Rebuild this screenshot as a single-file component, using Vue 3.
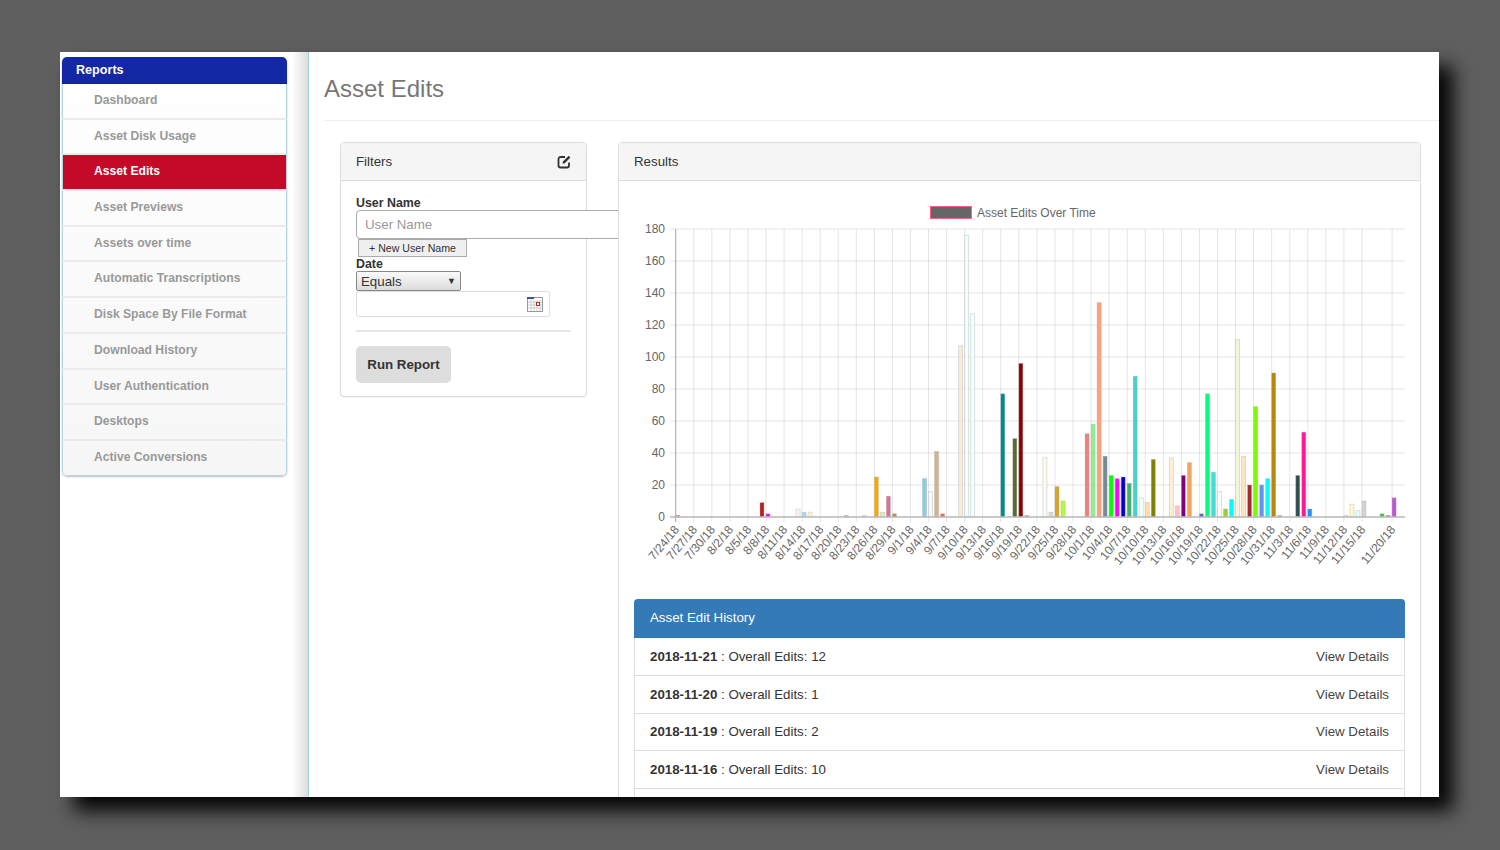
<script setup>
const navItems = [
  'Dashboard',
  'Asset Disk Usage',
  'Asset Edits',
  'Asset Previews',
  'Assets over time',
  'Automatic Transcriptions',
  'Disk Space By File Format',
  'Download History',
  'User Authentication',
  'Desktops',
  'Active Conversions',
]

const history = [
  { date: '2018-11-21', edits: 12 },
  { date: '2018-11-20', edits: 1 },
  { date: '2018-11-19', edits: 2 },
  { date: '2018-11-16', edits: 10 },
  { date: '2018-11-15', edits: 4 },
]

// chart geometry, in svg coordinates
const left = 41.7
const right = 771
const zero = 317
const top = 29
const step = 6.02
const unit = (zero - top) / 180

const yTicks = [0, 20, 40, 60, 80, 100, 120, 140, 160, 180].map((v) => ({
  v,
  y: zero - v * unit,
}))

const dateLabels = [
  '7/24/18', '7/27/18', '7/30/18', '8/2/18', '8/5/18', '8/8/18', '8/11/18', '8/14/18',
  '8/17/18', '8/20/18', '8/23/18', '8/26/18', '8/29/18', '9/1/18', '9/4/18', '9/7/18',
  '9/10/18', '9/13/18', '9/16/18', '9/19/18', '9/22/18', '9/25/18', '9/28/18', '10/1/18',
  '10/4/18', '10/7/18', '10/10/18', '10/13/18', '10/16/18', '10/19/18', '10/22/18',
  '10/25/18', '10/28/18', '10/31/18', '11/3/18', '11/6/18', '11/9/18', '11/12/18', '11/15/18',
]
const xTicks = [
  ...dateLabels.map((label, i) => ({ label, x: left + i * 3 * step })),
  { label: '11/20/18', x: left + 119 * step },
]

const rawBars = [
  [0, 1, '#ff6384'], [14, 9, '#b22222'], [15, 2, '#ff00ff'], [20, 5, '#fff0f5'],
  [21, 3, '#add8e6'], [22, 3, '#fafad2'], [28, 1, '#b0a0d8'], [31, 1, '#faebd7'],
  [33, 25, '#ffa500'], [34, 3, '#eee8aa'], [35, 13, '#db7093'], [36, 2, '#cd853f'],
  [41, 24, '#87ceeb'], [42, 16, '#f8f8f8'], [43, 41, '#d2b48c'], [44, 2, '#ff6347'],
  [47, 107, '#faebd7'], [48, 176, '#f0ffff'], [49, 127, '#f0ffff'], [54, 77, '#008b8b'],
  [56, 49, '#556b2f'], [57, 96, '#8b0000'], [58, 1, '#9a9acd'], [61, 37, '#fffaf0'],
  [62, 3, '#dcdcdc'], [63, 19, '#daa520'], [64, 10, '#adff2f'], [68, 52, '#f08080'],
  [69, 58, '#90ee90'], [70, 134, '#ffa07a'], [71, 38, '#778899'], [72, 26, '#00ff00'],
  [73, 24, '#ff00ff'], [74, 25, '#0000cd'], [75, 21, '#3cb371'], [76, 88, '#48d1cc'],
  [77, 12, '#f5fffa'], [78, 9, '#ffdead'], [79, 36, '#808000'], [82, 37, '#ffefd5'],
  [83, 7, '#ffc0cb'], [84, 26, '#800080'], [85, 34, '#f4a460'], [87, 2, '#6a5acd'],
  [88, 77, '#00ff7f'], [89, 28, '#40e0d0'], [90, 16, '#fbfbfb'], [91, 5, '#9acd32'],
  [92, 11, '#00ffff'], [93, 111, '#f5f5dc'], [94, 38, '#ffe4c4'], [95, 20, '#a52a2a'],
  [96, 69, '#7cfc00'], [97, 20, '#6495ed'], [98, 24, '#00ffff'], [99, 90, '#b8860b'],
  [100, 1, '#bdb76b'], [103, 26, '#2f4f4f'], [104, 53, '#ff1493'], [105, 5, '#1e90ff'],
  [111, 1, '#e6e6fa'], [112, 8, '#fffacd'], [113, 4, '#e0ffff'], [114, 10, '#d3d3d3'],
  [117, 2, '#32cd32'], [118, 1, '#b06080'], [119, 12, '#ba55d3'],
]
const bars = rawBars.map(([i, value, color]) => ({
  x: left + i * step,
  y: zero - value * unit,
  h: value * unit,
  color,
}))
</script>

<template>
  <div class="page">
    <div class="window">
      <aside class="sidebar">
        <div class="nav">
          <div class="nav-title">Reports</div>
          <a
            v-for="item in navItems"
            :key="item"
            class="nav-item"
            :class="{ active: item === 'Asset Edits' }"
          >{{ item }}</a>
        </div>
      </aside>

      <main class="main">
        <h1 class="title">Asset Edits</h1>
        <div class="content">
          <section class="panel filters">
            <div class="panel-heading">
              <span>Filters</span>
              <svg class="edit-icon" width="14" height="14" viewBox="0 0 14 14">
                <path d="M8 2H3.5A2 2 0 0 0 1.500 4v6.500a2 2 0 0 0 2 2h6.500a2 2 0 0 0 2-2V7.500" fill="none" stroke="#333" stroke-width="1.800" />
                <path d="M5.500 8.800 6 6.400 11.600.8 13.400 2.600 7.800 8.200z" fill="#333" />
              </svg>
            </div>
            <div class="filters-body">
              <label class="field-label">User Name</label>
              <input class="text-input" type="text" placeholder="User Name" />
              <button class="add-btn" type="button">+ New User Name</button>
              <label class="field-label date-label">Date</label>
              <div class="select-box">
                <span>Equals</span>
                <span class="select-arrow">▼</span>
              </div>
              <div class="date-input">
                <svg width="16" height="15" viewBox="0 0 16 15">
                  <rect x="0.500" y="0.500" width="15" height="14" fill="#fff" stroke="#999" />
                  <rect x="0" y="0" width="7" height="2" fill="#3f4fa8" />
                  <path d="M1 5h14M1 8h14M1 11h14M4 3v11M7 3v11M10 3v11M13 3v11" stroke="#ccc" stroke-width="1" />
                  <rect x="9.500" y="5.500" width="3" height="3" fill="#fff" stroke="#b03030" />
                </svg>
              </div>
              <div class="divider"></div>
              <button class="run-btn" type="button">Run Report</button>
            </div>
          </section>

          <section class="panel results">
            <div class="panel-heading">Results</div>
            <div class="results-body">
              <svg class="chart" width="771" height="399" viewBox="0 0 771 399">
                <rect x="296.500" y="6.500" width="41" height="12" fill="#666" stroke="#ff6384" />
                <text x="343" y="17" class="legend-text">Asset Edits Over Time</text>

                <g stroke="rgba(0,0,0,0.1)">
                  <line
                    v-for="t in yTicks"
                    :key="t.v"
                    x1="36"
                    :x2="right"
                    :y1="t.y"
                    :y2="t.y"
                  />
                  <line
                    v-for="t in xTicks"
                    :key="t.label"
                    :x1="t.x"
                    :x2="t.x"
                    :y1="top"
                    :y2="zero + 5"
                  />
                </g>
                <line :x1="left" :x2="left" :y1="top" :y2="zero + 5" stroke="#aaa" />

                <rect
                  v-for="b in bars"
                  :key="b.x"
                  :x="b.x"
                  :y="b.y"
                  width="4"
                  :height="b.h"
                  :fill="b.color"
                  stroke="rgba(170,170,170,0.45)"
                  stroke-width="0.8"
                />
                <line x1="36" :x2="right" :y1="zero" :y2="zero" stroke="#bbb" stroke-width="1.500" />

                <text
                  v-for="t in yTicks"
                  :key="'y' + t.v"
                  x="31"
                  :y="t.y + 4"
                  text-anchor="end"
                  class="tick-text"
                >{{ t.v }}</text>
                <text
                  v-for="t in xTicks"
                  :key="'x' + t.label"
                  text-anchor="end"
                  class="tick-text"
                  :transform="`translate(${t.x + 4} ${zero + 13}) rotate(-50)`"
                >{{ t.label }}</text>
              </svg>

              <div class="history">
                <div class="history-title">Asset Edit History</div>
                <div v-for="row in history" :key="row.date" class="history-row">
                  <span><strong>{{ row.date }}</strong> : Overall Edits: {{ row.edits }}</span>
                  <a class="details">View Details</a>
                </div>
              </div>
            </div>
          </section>
        </div>
      </main>
    </div>
  </div>
</template>

<style>
html,
body {
  margin: 0;
  background: #5f5f5f;
}
</style>

<style scoped>
.page {
  width: 1500px;
  height: 850px;
  padding: 52px 0 0 60px;
  box-sizing: border-box;
  overflow: hidden;
  background: #5f5f5f;
  font-family: "Liberation Sans", Arial, sans-serif;
  font-size: 13.3px;
  color: #333;
}

.window {
  display: flex;
  width: 1379px;
  height: 745px;
  overflow: hidden;
  background: #fff;
  box-shadow: 14px 14px 18px rgba(0, 0, 0, 0.95);
}

.window {
  overflow: hidden;
}

.sidebar {
  flex: none;
  width: 227px;
  padding: 5px 19px 0 2px;
  border-right: 1px solid #9fd0e0;
  background: linear-gradient(to right, #fff 232px, #dcdcdc 248px);
}

.nav {
  width: 225px;
  border-radius: 5px;
  overflow: hidden;
  background: linear-gradient(#fff, #f6f6f6);
  box-shadow: 0 1px 2px rgba(0, 0, 0, 0.25);
}

.nav-title {
  height: 26px;
  padding-left: 14px;
  line-height: 26px;
  border-bottom: 1px solid #0e2290;
  background: #1428a6;
  color: #fff;
  font-size: 12.6px;
  font-weight: 700;
}

.nav-item {
  display: block;
  height: 33.7px;
  padding-left: 31px;
  line-height: 33.7px;
  border: solid #b4d4e2;
  border-width: 0 1px;
  border-bottom: 2px solid #ebebeb;
  color: #999;
  font-size: 12.15px;
  font-weight: 700;
}

.nav-item:last-child {
  border-bottom: 1px solid #b4d4e2;
  border-radius: 0 0 5px 5px;
}

.nav-item.active {
  background: #c40a26;
  color: #fff;
}

.main {
  flex: 1;
  min-width: 0;
  padding-left: 15px;
}

.title {
  height: 68px;
  margin: 0;
  line-height: 73px;
  border-bottom: 1px solid #eee;
  color: #777;
  font-size: 24px;
  font-weight: 400;
}

.content {
  display: flex;
  align-items: flex-start;
  gap: 31px;
  padding: 21px 0 0 16px;
}

.panel {
  border: 1px solid #ddd;
  border-radius: 4px;
  background: #fff;
  box-shadow: 0 1px 1px rgba(0, 0, 0, 0.05);
}

.panel-heading {
  display: flex;
  align-items: center;
  justify-content: space-between;
  height: 37px;
  padding: 0 15px;
  border-bottom: 1px solid #ddd;
  border-radius: 3px 3px 0 0;
  background: #f5f5f5;
}

.filters {
  flex: none;
  width: 245px;
  height: 253px;
}

.filters-body {
  padding: 15px;
}

.field-label {
  display: block;
  height: 14px;
  line-height: 14px;
  font-size: 12.4px;
  font-weight: 700;
}

.text-input {
  display: block;
  box-sizing: border-box;
  width: 300px;
  height: 29px;
  padding: 0 8px;
  border: 1px solid #aaa;
  border-radius: 4px;
  outline: none;
  font: 13.3px "Liberation Sans", Arial, sans-serif;
}

.text-input::placeholder {
  color: #999;
}

.add-btn {
  display: block;
  box-sizing: border-box;
  width: 109px;
  height: 18px;
  margin: 0 0 0 2px;
  padding: 0;
  border: 1px solid #aaa;
  background: #efefef;
  color: #333;
  font: 10.6px "Liberation Sans", Arial, sans-serif;
}

.select-box {
  display: flex;
  align-items: center;
  justify-content: space-between;
  box-sizing: border-box;
  width: 105px;
  height: 20px;
  padding: 0 4px;
  border: 1px solid #888;
  border-radius: 2px;
  background: linear-gradient(#fafafa, #dcdcdc);
}

.select-arrow {
  font-size: 9px;
}

.date-input {
  display: flex;
  align-items: center;
  justify-content: flex-end;
  box-sizing: border-box;
  width: 194px;
  height: 26px;
  padding-right: 6px;
  border: 1px solid #ddd;
  border-radius: 3px;
}

.divider {
  width: 215px;
  margin: 13px 0 14px;
  border-top: 2px solid #e6e6e6;
}

.run-btn {
  display: block;
  width: 95px;
  height: 37px;
  padding: 0;
  border: none;
  border-radius: 5px;
  background: #ddd;
  color: #333;
  font: 700 13.3px "Liberation Sans", Arial, sans-serif;
}

.results {
  position: relative;
  flex: none;
  width: 801px;
  height: 700px;
}

.results-body {
  padding: 19px 15px 0;
}

.chart {
  display: block;
}

.legend-text,
.tick-text {
  fill: #666;
  font-size: 12px;
}

.history {
  border: 1px solid #ddd;
  border-top: none;
  border-radius: 4px;
}

.history-title {
  height: 39px;
  margin: 0 -1px;
  padding-left: 16px;
  line-height: 38px;
  border-radius: 4px 4px 0 0;
  background: #337ab7;
  color: #fff;
}

.history-row {
  display: flex;
  align-items: center;
  justify-content: space-between;
  height: 36.8px;
  padding: 0 15px;
  border-bottom: 1px solid #ddd;
}

.details {
  color: #444;
}
</style>
